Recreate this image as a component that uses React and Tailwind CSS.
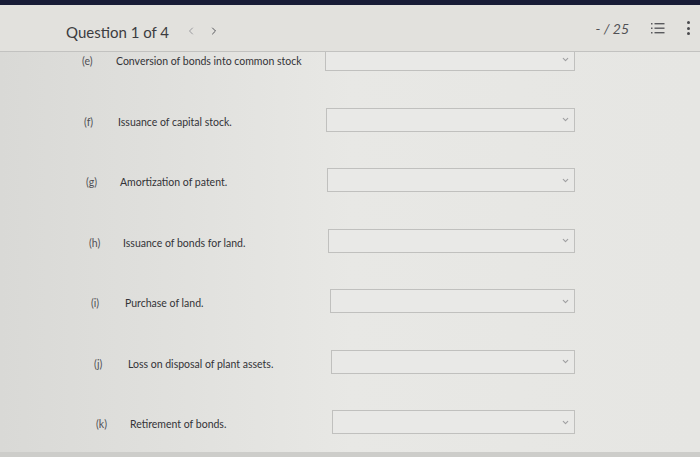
import { ChevronDown, ChevronLeft, ChevronRight } from "lucide-react";

const rows = [
  { id: "(e)", text: "Conversion of bonds into common stock", pad: "pl-[82px]", tw: "w-[209px]" },
  { id: "(f)", text: "Issuance of capital stock.", pad: "pl-[84px]", tw: "w-[208px]" },
  { id: "(g)", text: "Amortization of patent.", pad: "pl-[86px]", tw: "w-[207px]" },
  { id: "(h)", text: "Issuance of bonds for land.", pad: "pl-[89px]", tw: "w-[205px]" },
  { id: "(i)", text: "Purchase of land.", pad: "pl-[91px]", tw: "w-[205px]" },
  { id: "(j)", text: "Loss on disposal of plant assets.", pad: "pl-[94px]", tw: "w-[203px]" },
  { id: "(k)", text: "Retirement of bonds.", pad: "pl-[96px]", tw: "w-[202px]" },
];

function ListIcon() {
  return (
    <svg width="14" height="13" viewBox="0 0 14 13" className="text-[#5a5a5e]">
      <g fill="currentColor">
        <rect x="0" y="1" width="1.5" height="1.5" />
        <rect x="0" y="5.5" width="1.5" height="1.5" />
        <rect x="0" y="10" width="1.5" height="1.5" />
        <rect x="3.5" y="1" width="10" height="1.4" />
        <rect x="3.5" y="5.5" width="10" height="1.4" />
        <rect x="3.5" y="10" width="10" height="1.4" />
      </g>
    </svg>
  );
}

function Row({ id, text, pad, tw }) {
  return (
    <div className={`flex h-[60.5px] items-center pr-[125px] ${pad}`}>
      <span className="w-[34px] shrink-0 pt-[6px] text-[10.5px] text-[#505055]">{id}</span>
      <span className={`shrink-0 pt-[6px] text-[10.5px] text-[#333337] ${tw}`}>{text}</span>
      <div className="flex h-[24px] flex-1 items-center justify-end border border-[#c0c0be] bg-[#e9e9e7] pr-[4px]">
        <ChevronDown size={9} strokeWidth={3} className="text-[#a0a0a2]" />
      </div>
    </div>
  );
}

export default function App() {
  return (
    <div className="flex h-[457px] w-[700px] flex-col overflow-hidden bg-[#e6e6e3] font-['Lato',sans-serif]">
      <div className="h-[5px] shrink-0 bg-[#181c36]" />
      <div className="flex h-[47px] shrink-0 items-center border-b border-[#c2c2c0] bg-[#e2e1dd] pl-[66px] pr-[10px]">
        <span className="pt-[8px] text-[15px] text-[#3c3c40]">Question 1 of 4</span>
        <ChevronLeft size={12} strokeWidth={2} className="ml-[16px] mt-[6px] text-[#9a9a9e]" />
        <ChevronRight size={12} strokeWidth={2} className="ml-[11px] mt-[6px] text-[#55555a]" />
        <span className="ml-auto text-[14px] italic text-[#505054]">- / 25</span>
        <span className="ml-[22px]">
          <ListIcon />
        </span>
        <span className="ml-[22px] flex flex-col gap-[2.5px]">
          <span className="h-[3px] w-[3px] rounded-full bg-[#4a4a4e]" />
          <span className="h-[3px] w-[3px] rounded-full bg-[#4a4a4e]" />
          <span className="h-[3px] w-[3px] rounded-full bg-[#4a4a4e]" />
        </span>
      </div>
      <div className="flex-1 overflow-hidden bg-gradient-to-r from-[#d9d9d6] via-[#e8e8e5] to-[#e6e6e3]">
        <div className="-mt-[23px]">
          {rows.map((r) => (
            <Row key={r.id} {...r} />
          ))}
        </div>
      </div>
      <div className="h-[5px] shrink-0 bg-[#cdcdca]" />
    </div>
  );
}
